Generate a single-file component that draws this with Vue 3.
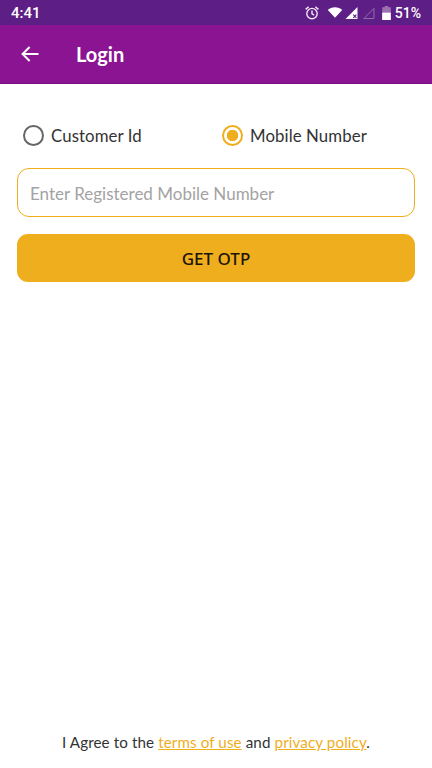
<template>
  <div class="screen">
    <div class="status-bar">
      <span class="time">4:41</span>
      <div class="status-icons">
        <svg class="alarm" width="16" height="16" viewBox="0 0 16 16" fill="none" stroke="#f3e6f5" stroke-width="1.4">
          <circle cx="8" cy="8.6" r="5.2" />
          <path d="M8 5.6v3.2l2.2 1.3" />
          <path d="M1.6 4.4l3-2.5M14.4 4.4l-3-2.5" />
        </svg>
        <svg class="wifi" width="16" height="11" viewBox="0 0 17 13">
          <path d="M0 3.4C2.2 1.4 5.2.3 8.5.3s6.3 1.1 8.5 3.1L8.5 12.8z" fill="#fff" />
        </svg>
        <svg class="signal" width="13" height="12" viewBox="0 0 13 13">
          <path d="M13 0v13H0z" fill="#fff" />
          <path d="M8.4 8.2l3.4 3.6M11.8 8.2l-3.4 3.6" stroke="#5d1f85" stroke-width="1.2" />
        </svg>
        <svg class="signal-off" width="13" height="12" viewBox="0 0 13 13">
          <path d="M12.4 1.5v11H1.5z" fill="none" stroke="#9a72b4" stroke-width="1" />
        </svg>
        <svg class="battery" width="9" height="14" viewBox="0 0 8 13">
          <path d="M2.4 0h3.2v1.2H8V13H0V1.2h2.4z" fill="#9a72b4" />
          <rect y="6.2" width="8" height="6.8" fill="#fff" />
        </svg>
        <span class="percent">51%</span>
      </div>
    </div>

    <header class="toolbar">
      <svg class="back" width="18" height="16" viewBox="0 0 18 16" fill="none" stroke="#fff" stroke-width="2">
        <path d="M17.5 8H2M8.6 1L1.6 8l7 7" />
      </svg>
      <h1>Login</h1>
    </header>

    <main class="content">
      <div class="radios">
        <label v-for="opt in options" :key="opt.id" class="radio" :class="{ active: selected === opt.id }" @click="selected = opt.id">
          <span class="dot"></span>
          {{ opt.label }}
        </label>
      </div>

      <input class="field" type="text" :placeholder="placeholder" />
      <button class="otp-btn">GET OTP</button>
    </main>

    <footer class="agree">
      I Agree to the <a>terms of use</a> and <a>privacy policy</a>.
    </footer>
  </div>
</template>

<script setup>
import { computed, ref } from "vue";

const options = [
  { id: "customer", label: "Customer Id" },
  { id: "mobile", label: "Mobile Number" },
];
const selected = ref("mobile");

const placeholder = computed(() =>
  selected.value === "mobile" ? "Enter Registered Mobile Number" : "Enter Customer Id"
);
</script>

<style>
html, body { margin: 0; background: #fff; }
</style>

<style scoped>
.screen {
  width: 432px;
  height: 768px;
  display: flex;
  flex-direction: column;
  font-family: "Lato", "Noto Sans", sans-serif;
  color: #333;
  overflow: hidden;
}
.status-bar {
  height: 25px;
  background: #5d1f85;
  color: #fff;
  display: flex;
  align-items: center;
  justify-content: space-between;
  padding: 0 11px;
  font-family: "Roboto", sans-serif;
  font-size: 14px;
  font-weight: 500;
}
.time { font-size: 15px; }
.status-icons {
  display: flex;
  align-items: center;
}
.alarm { margin-right: 7px; }
.wifi { margin-right: 2px; }
.signal { margin-right: 4px; }
.battery { margin-left: 7px; margin-right: 4px; }
.toolbar {
  height: 58px;
  background: #8a1491;
  border-bottom: 1px solid #7a1080;
  display: flex;
  align-items: center;
  padding-left: 21px;
}
.toolbar h1 {
  margin: 0 0 0 37px;
  font-size: 20px;
  font-weight: 700;
  color: #fff;
}
.content {
  flex: 1;
  padding: 0 17px;
}
.radios {
  display: flex;
  padding-top: 40px;
  height: 22px;
  align-items: center;
}
.radio {
  display: flex;
  align-items: center;
  font-size: 16.8px;
  letter-spacing: 0.1px;
  gap: 7px;
  padding-left: 6px;
  width: 193px;
  flex-shrink: 0;
}
.dot {
  width: 21px;
  height: 21px;
  box-sizing: border-box;
  border: 2px solid #666;
  border-radius: 50%;
}
.radio.active .dot {
  border-color: #efae1d;
  background: radial-gradient(circle, #efae1d 0 5.5px, #fff 6px);
}
.field {
  display: block;
  width: 100%;
  height: 49px;
  box-sizing: border-box;
  margin-top: 22px;
  padding: 1px 12px 0;
  border: 1.3px solid #efae1d;
  border-radius: 12px;
  font-family: inherit;
  font-size: 17px;
  outline: none;
}
.field::placeholder { color: #a3a3a3; }
.otp-btn {
  display: block;
  width: 100%;
  height: 48px;
  margin-top: 17px;
  padding: 1px 0 0;
  border: none;
  border-radius: 11px;
  background: #efae1d;
  color: #1c1408;
  font-family: "Noto Sans", sans-serif;
  font-size: 17px;
  font-weight: 500;
}
.agree {
  text-align: center;
  font-size: 15.2px;
  letter-spacing: 0.1px;
  padding-bottom: 17px;
}
.agree a {
  color: #efae1d;
  text-decoration: underline;
}
</style>
